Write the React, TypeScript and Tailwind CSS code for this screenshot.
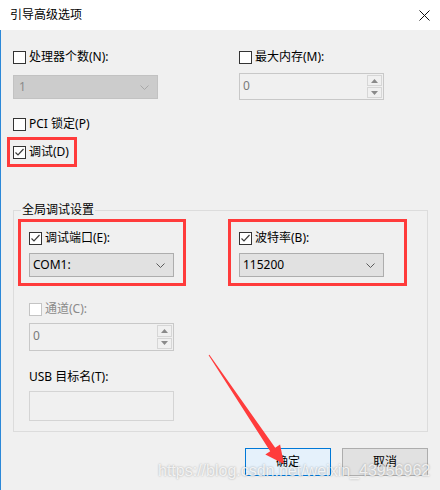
import React from "react";

const font = "font-['Noto_Sans','Noto_Sans_CJK_SC',sans-serif]";

function CheckBox({ checked = false, disabled = false }: { checked?: boolean; disabled?: boolean }) {
  return (
    <span
      className={`flex h-[13px] w-[13px] shrink-0 items-center justify-center border bg-white ${
        disabled ? "border-[#c4c4c4]" : "border-[#333333]"
      }`}
    >
      {checked && (
        <svg width="11" height="11" viewBox="0 0 11 11">
          <polyline points="1.5,5.5 4,8 9.5,2" fill="none" stroke="#3c3c3c" strokeWidth="1.2" />
        </svg>
      )}
    </span>
  );
}

function CheckLabel({ text, checked, disabled }: { text: string; checked?: boolean; disabled?: boolean }) {
  return (
    <div className="flex h-4 items-center gap-[3px]">
      <CheckBox checked={checked} disabled={disabled} />
      <span className={`text-[12px] leading-4 ${disabled ? "text-[#8a8a8a]" : "text-black"}`}>{text}</span>
    </div>
  );
}

function Chevron({ color }: { color: string }) {
  return (
    <svg width="9" height="5" viewBox="0 0 9 5">
      <polyline points="0.5,0.5 4.5,4.5 8.5,0.5" fill="none" stroke={color} strokeWidth="1" />
    </svg>
  );
}

function Select({ value, disabled = false }: { value: string; disabled?: boolean }) {
  return (
    <div
      className={`flex h-[24px] w-[145px] items-center justify-between border pr-[8px] ${
        disabled ? "border-[#c2c2c2] bg-[#cccccc] pl-[5px] text-[#8a8a8a]" : "border-[#adadad] bg-[#e1e1e1] pl-[3px] text-black"
      }`}
    >
      <span className="text-[12px] leading-4">{value}</span>
      <Chevron color={disabled ? "#a8a8a8" : "#5a5a5a"} />
    </div>
  );
}

function Spin({ value, h }: { value: string; h: string }) {
  return (
    <div className={`flex w-[145px] border border-[#c8c8c8] bg-[#f0f0f0] ${h}`}>
      <span className="flex-1 pl-[3px] pt-[4px] text-[12px] leading-4 text-[#7a7a7a]">{value}</span>
      <div className="flex w-[17px] flex-col gap-[1px] p-[1px]">
        <div className="flex flex-1 items-center justify-center border border-[#d6d6d6] bg-[#f0f0f0]">
          <svg width="7" height="4" viewBox="0 0 7 4">
            <polygon points="0,4 3.5,0 7,4" fill="#8a8a8a" />
          </svg>
        </div>
        <div className="flex flex-1 items-center justify-center border border-[#d6d6d6] bg-[#f0f0f0]">
          <svg width="7" height="4" viewBox="0 0 7 4">
            <polygon points="0,0 3.5,4 7,0" fill="#8a8a8a" />
          </svg>
        </div>
      </div>
    </div>
  );
}

export default function App() {
  return (
    <div className={`relative flex h-[490px] w-[440px] flex-col overflow-hidden ${font}`}>
      {/* title bar */}
      <div className="flex h-[30px] shrink-0 items-center justify-between bg-white pl-[10px] pr-[10px]">
        <span className="text-[12px] leading-4 text-black">引导高级选项</span>
        <svg width="11" height="11" viewBox="0 0 11 11">
          <path d="M0.5 0.5 L10.5 10.5 M10.5 0.5 L0.5 10.5" stroke="#111" strokeWidth="1" />
        </svg>
      </div>

      {/* body */}
      <div className="flex flex-1 flex-col border-l border-[#2b88d8] bg-[#f0f0f0] pl-[12px] pr-[12px] pt-[19px]">
        <div className="grid grid-cols-[226px_1fr]">
          <div className="flex flex-col">
            <CheckLabel text="处理器个数(N):" />
            <div className="mt-[10px]">
              <Select value="1" disabled />
            </div>
          </div>
          <div className="flex flex-col">
            <CheckLabel text="最大内存(M):" />
            <div className="mt-[8px]">
              <Spin value="0" h="h-[27px]" />
            </div>
          </div>
        </div>

        <div className="mt-[16px]">
          <CheckLabel text="PCI 锁定(P)" />
        </div>

        <div className="-ml-[6px] mt-[5px] flex h-[30px] w-[70px] items-center border-[3px] border-[#ff3b3b] pl-[3px]">
          <CheckLabel text="调试(D)" checked />
        </div>

        <fieldset className="mt-[35px] border border-[#dcdcdc] pb-[10px]">
          <legend className="ml-[7px] px-[1px] text-[12px] leading-4 text-black">全局调试设置</legend>

          <div className="mt-[1px] flex pl-[4px]">
            <div className="flex h-[67px] w-[168px] flex-col border-[3px] border-[#ff3b3b] pl-[8px] pt-[8px]">
              <CheckLabel text="调试端口(E):" checked />
              <div className="mt-[7px]">
                <Select value="COM1:" />
              </div>
            </div>
            <div className="ml-[42px] flex h-[67px] w-[179px] flex-col border-[3px] border-[#ff3b3b] pl-[8px] pt-[8px]">
              <CheckLabel text="波特率(B):" checked />
              <div className="mt-[7px]">
                <Select value="115200" />
              </div>
            </div>
          </div>

          <div className="flex flex-col pl-[15px]">
            <div className="mt-[15px]">
              <CheckLabel text="通道(C):" disabled />
            </div>
            <div className="mt-[6px]">
              <Spin value="0" h="h-[28px]" />
            </div>
            <span className="mt-[18px] h-4 text-[12px] leading-4 text-black">USB 目标名(T):</span>
            <div className="mt-[6px] h-[30px] w-[145px] border border-[#d4d4d4] bg-[#f0f0f0]" />
          </div>
        </fieldset>

        <div className="mt-[16px] flex justify-end gap-[11px]">
          <button className="flex h-[28px] w-[86px] items-center justify-center border border-[#0078d7] bg-[#e5f1fb] text-[12px] leading-4 text-black">
            确定
          </button>
          <button className="flex h-[28px] w-[86px] items-center justify-center border border-[#adadad] bg-[#e1e1e1] text-[12px] leading-4 text-black">
            取消
          </button>
        </div>
      </div>

      {/* annotation arrow */}
      <svg className="pointer-events-none absolute left-0 top-0" width="440" height="490" viewBox="0 0 440 490">
        <polygon
          points="209.4,354.7 275.2,447.8 280.1,444.4 284,464 265.3,454.6 270.2,451.2 208.6,355.3"
          fill="#ff3c3c"
        />
      </svg>

      {/* watermark */}
      <span className="pointer-events-none absolute left-[158px] top-[461px] font-['Liberation_Sans',sans-serif] text-[16px] leading-5 text-white/80 [text-shadow:0_0_2px_rgba(0,0,0,0.35)]">
        https://blog.csdn.net/weixin_43956962
      </span>
    </div>
  );
}
